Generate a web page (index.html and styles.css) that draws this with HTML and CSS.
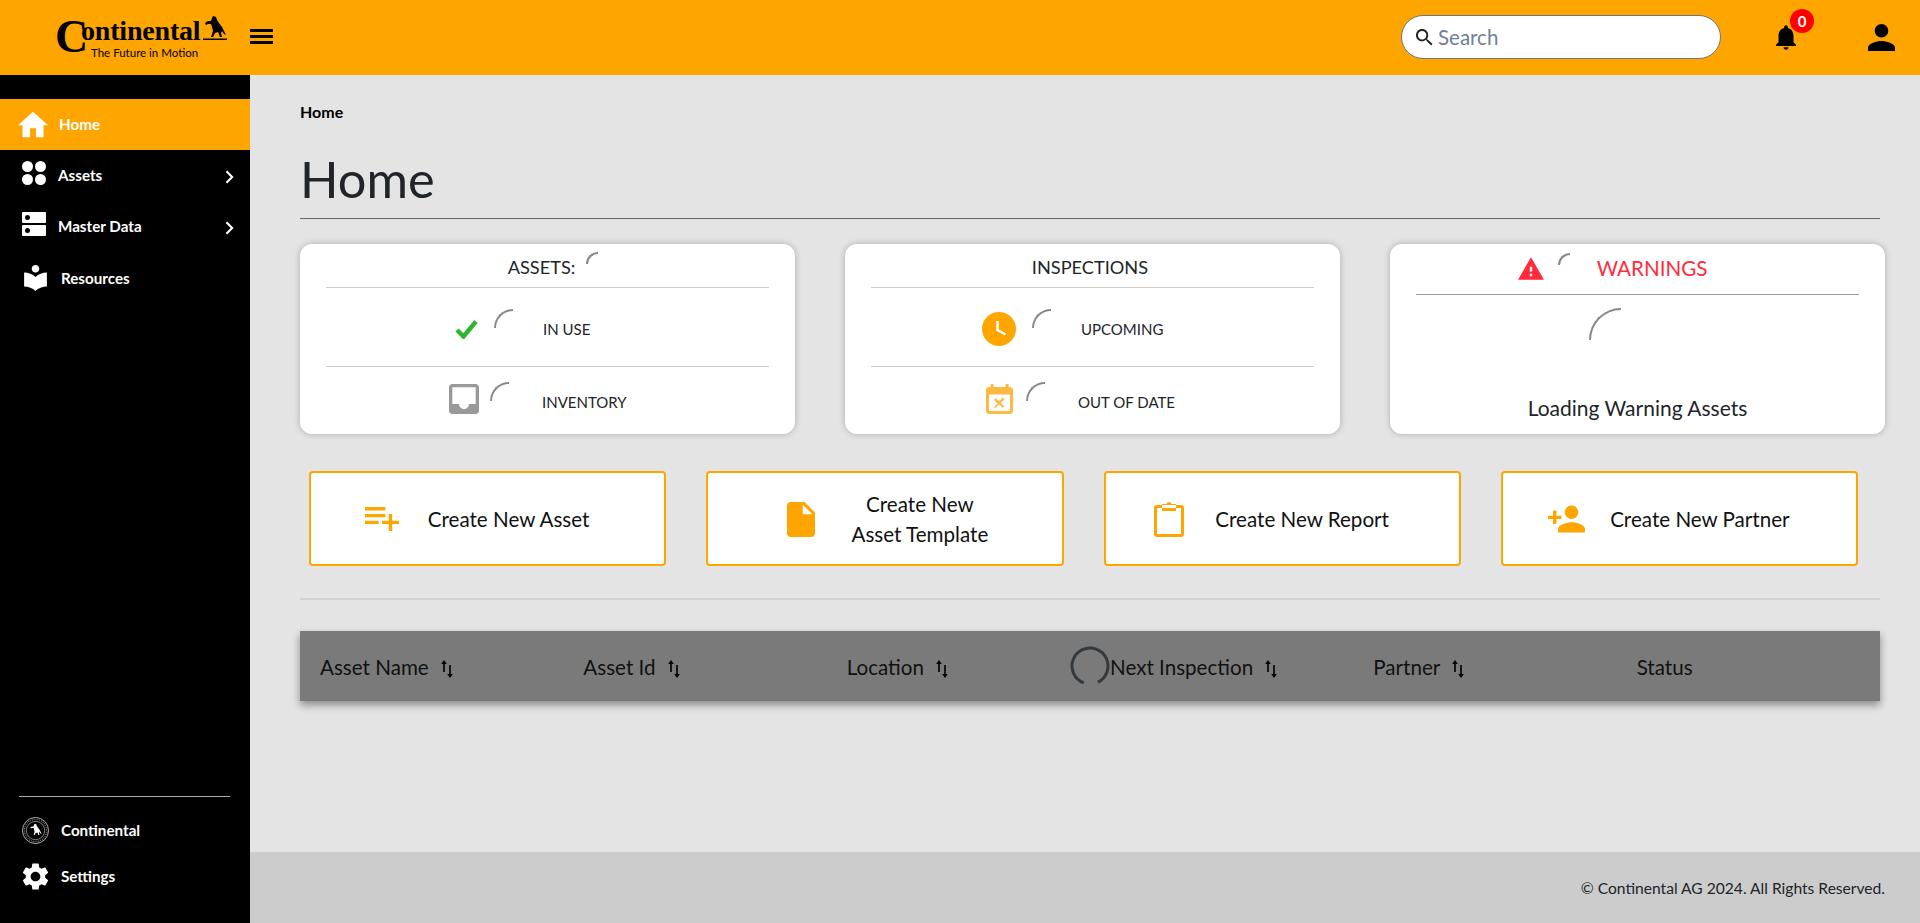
FILE: index.html
```html
<!DOCTYPE html>
<html lang="en">
<head>
    <meta charset="UTF-8">
    <meta name="viewport" content="width=device-width, initial-scale=1.0">
    <title>Home</title>
    <link rel="stylesheet" href="styles.css">
</head>
<body>
    <header class="topbar">
        <div class="logo">
            <div class="logo-mark">
                <div class="logo-word">Continental</div>
                <svg class="logo-horse" viewBox="0 0 24 24"><path d="M10 0l3 1 1 3 2 3 3 4 2 4 2 4-2-1-2-3-1 2 1 4h-2l-2-5-3 1-2 4H8l2-6-1-4-1-3H5l-2 1-1-2 3-2h3l1-3z"/><path d="M0 22.500h24V24H0z"/></svg>
            </div>
            <div class="logo-tag">The Future in Motion</div>
        </div>
        <div class="hamburger"><span></span><span></span><span></span></div>

        <div class="search">
            <svg class="search-icon" viewBox="3 3 18 18"><path d="M15.500 14h-.79l-.28-.27C15.410 12.590 16 11.110 16 9.500 16 5.910 13.090 3 9.500 3S3 5.910 3 9.500 5.910 16 9.500 16c1.610 0 3.090-.59 4.230-1.570l.27.28v.79l5 4.990L20.490 19l-4.990-5zm-6 0C7.010 14 5 11.990 5 9.500S7.010 5 9.500 5 14 7.010 14 9.500 11.990 14 9.500 14z"/></svg>
            <span class="search-text">Search</span>
        </div>
        <div class="bell">
            <svg class="bell-icon" viewBox="4 2.500 16 19.500"><path d="M12 22c1.100 0 2-.9 2-2h-4c0 1.100.89 2 2 2zm6-6v-5c0-3.070-1.640-5.640-4.500-6.320V4c0-.83-.67-1.500-1.500-1.500s-1.500.67-1.500 1.500v.68C7.630 5.360 6 7.920 6 11v5l-2 2v1h16v-1l-2-2z"/></svg>
            <span class="badge">0</span>
        </div>
        <svg class="user-icon" viewBox="4 4 16 16"><path d="M12 12c2.210 0 4-1.790 4-4s-1.790-4-4-4-4 1.790-4 4 1.790 4 4 4zm0 2c-2.670 0-8 1.340-8 4v2h16v-2c0-2.660-5.330-4-8-4z"/></svg>
    </header>

    <div class="page">
        <nav class="sidebar">
            <ul class="nav-list">
                <li class="nav-item active">
                    <svg class="nav-icon nav-icon-home" viewBox="2 3 20 17"><path d="M10 20v-6h4v6h5v-8h3L12 3 2 12h3v8z"/></svg>
                    <span>Home</span>
                </li>
                <li class="nav-item">
                    <svg class="nav-icon nav-icon-assets" viewBox="0 0 24 24"><circle cx="5.500" cy="5.500" r="5.500"/><circle cx="18.500" cy="5.500" r="5.500"/><circle cx="5.500" cy="18.500" r="5.500"/><circle cx="18.500" cy="18.500" r="5.500"/></svg>
                    <span>Assets</span>
                    <svg class="nav-arrow" viewBox="0 0 10 16"><path d="M1.500 1.500L8 8l-6.500 6.500"/></svg>
                </li>
                <li class="nav-item">
                    <svg class="nav-icon nav-icon-assets" viewBox="0 0 24 24"><path d="M1 0h22a1 1 0 0 1 1 1v9a1 1 0 0 1-1 1H1a1 1 0 0 1-1-1V1a1 1 0 0 1 1-1zm4.500 3a2.500 2.500 0 1 0 0 5 2.500 2.500 0 0 0 0-5zM1 13h22a1 1 0 0 1 1 1v9a1 1 0 0 1-1 1H1a1 1 0 0 1-1-1v-9a1 1 0 0 1 1-1zm4.500 3a2.500 2.500 0 1 0 0 5 2.500 2.500 0 0 0 0-5z" fill-rule="evenodd"/></svg>
                    <span>Master Data</span>
                    <svg class="nav-arrow" viewBox="0 0 10 16"><path d="M1.500 1.500L8 8l-6.500 6.500"/></svg>
                </li>
                <li class="nav-item nav-item-wide">
                    <svg class="nav-icon nav-icon-book" viewBox="3 2 18 20.550"><path d="M12 11.550C9.640 9.350 6.480 8 3 8v11c3.480 0 6.640 1.350 9 3.550 2.360-2.190 5.520-3.550 9-3.550V8c-3.480 0-6.640 1.350-9 3.550zM12 8c1.660 0 3-1.340 3-3s-1.340-3-3-3-3 1.340-3 3 1.340 3 3 3z"/></svg>
                    <span>Resources</span>
                </li>
            </ul>
            <ul class="nav-foot">
                <li class="foot-item">
                    <svg class="foot-icon" viewBox="0 0 28 28">
                        <circle cx="14" cy="14" r="13.500" fill="none" stroke="#fff" stroke-width=".7"/>
                        <circle cx="14" cy="14" r="9.500" fill="none" stroke="#fff" stroke-width=".5"/>
                        <circle cx="14" cy="14" r="11.500" fill="none" stroke="#888" stroke-width="1.500" stroke-dasharray=".8 1.200"/>
                        <path transform="translate(7.500 7) scale(.56)" d="M10 0l3 1 1 3 2 3 3 4 2 4 2 4-2-1-2-3-1 2 1 4h-2l-2-5-3 1-2 4H8l2-6-1-4-1-3H5l-2 1-1-2 3-2h3l1-3z" fill="#fff"/>
                    </svg>
                    <span>Continental</span>
                </li>
                <li class="foot-item">
                    <svg class="foot-icon" viewBox="2.500 2 19 20"><path d="M19.140 12.940c.04-.3.060-.61.060-.94 0-.32-.02-.64-.07-.94l2.030-1.580c.18-.14.23-.41.120-.61l-1.920-3.320c-.12-.22-.37-.29-.59-.22l-2.390.960c-.5-.38-1.030-.7-1.620-.94l-.36-2.540c-.04-.24-.24-.41-.48-.41h-3.840c-.24 0-.43.170-.47.410l-.36 2.540c-.59.240-1.130.570-1.620.940l-2.390-.96c-.22-.08-.47 0-.59.220L2.740 8.870c-.12.210-.08.470.120.610l2.030 1.580c-.05.300-.09.630-.09.940s.02.640.070.940l-2.030 1.580c-.18.140-.23.410-.12.610l1.920 3.320c.12.220.37.290.59.220l2.390-.96c.5.380 1.030.7 1.620.94l.36 2.540c.05.240.24.410.48.410h3.840c.24 0 .44-.17.47-.41l.36-2.540c.59-.24 1.130-.56 1.620-.94l2.390.96c.22.080.47 0 .59-.22l1.920-3.320c.12-.22.070-.47-.12-.61l-2.010-1.580zM12 15.600c-1.980 0-3.600-1.620-3.600-3.600s1.620-3.600 3.600-3.600 3.600 1.620 3.600 3.600-1.620 3.600-3.600 3.600z"/></svg>
                    <span>Settings</span>
                </li>
            </ul>
        </nav>

        <div class="main">
            <main class="content">
                <div class="breadcrumb">Home</div>
                <h1 class="page-title">Home</h1>

                <section class="cards">
                    <div class="card">
                        <div class="card-title card-title-assets">
                            <span>ASSETS:</span>
                            <i class="arc arc-small"></i>
                        </div>
                        <div class="stat-row">
                            <div class="stat-icon">
                                <svg class="icon-check" viewBox="0 0 23 20"><path d="M2 11l6.500 6.500L21 2.500"/></svg>
                            </div>
                            <i class="arc"></i>
                            <span class="stat-label">IN USE</span>
                        </div>
                        <div class="stat-row stat-row-low">
                            <div class="stat-icon">
                                <svg class="icon-inbox" viewBox="3 3 18 18"><path d="M19 3H5c-1.100 0-2 .9-2 2v14c0 1.100.9 2 2 2h14c1.100 0 2-.9 2-2V5c0-1.100-.9-2-2-2zm0 12h-4c0 1.660-1.350 3-3 3s-3-1.340-3-3H5V5h14v10z"/></svg>
                            </div>
                            <i class="arc"></i>
                            <span class="stat-label">INVENTORY</span>
                        </div>
                    </div>

                    <div class="card card-inspections">
                        <div class="card-title">INSPECTIONS</div>
                        <div class="stat-row">
                            <div class="stat-icon">
                                <svg class="icon-clock" viewBox="0 0 34 34"><circle cx="17" cy="17" r="17"/><path d="M15.500 9v9l8 4.500"/></svg>
                            </div>
                            <i class="arc"></i>
                            <span class="stat-label">UPCOMING</span>
                        </div>
                        <div class="stat-row stat-row-low">
                            <div class="stat-icon">
                                <svg class="icon-calendar" viewBox="3 1 18 20"><path d="M9.310 17l2.440-2.440L14.190 17l1.060-1.060-2.440-2.440 2.440-2.440-1.060-1.060-2.440 2.440L9.310 10.500l-1.060 1.060 2.440 2.440-2.440 2.440L9.310 17zM19 3h-1V1h-2v2H8V1H6v2H5c-1.110 0-1.990.9-1.990 2L3 19c0 1.100.89 2 2 2h14c1.100 0 2-.9 2-2V5c0-1.100-.9-2-2-2zm0 16H5V8h14v11z"/></svg>
                            </div>
                            <i class="arc"></i>
                            <span class="stat-label">OUT OF DATE</span>
                        </div>
                    </div>

                    <div class="card">
                        <div class="warn-title">
                            <svg class="icon-warning" viewBox="1 2 22 19"><path d="M1 21h22L12 2 1 21zm12-3h-2v-2h2v2zm0-4h-2v-4h2v4z"/></svg>
                            <i class="arc arc-small"></i>
                            <span class="warn-text">WARNINGS</span>
                        </div>
                        <div class="warn-body">
                            <i class="arc arc-big"></i>
                            <p class="warn-loading">Loading Warning Assets</p>
                        </div>
                    </div>
                </section>

                <section class="shortcuts">
                    <a class="shortcut" href="#">
                        <svg class="shortcut-icon icon-list" viewBox="2 6 20 14"><path d="M14 10H2v2h12v-2zm0-4H2v2h12V6zm4 8v-4h-2v4h-4v2h4v4h2v-4h4v-2h-4zM2 16h8v-2H2v2z"/></svg>
                        <span class="shortcut-text">Create New Asset</span>
                    </a>
                    <a class="shortcut shortcut-template" href="#">
                        <svg class="shortcut-icon icon-file" viewBox="4 2 16 20"><path d="M6 2c-1.100 0-1.990.9-1.990 2L4 20c0 1.100.89 2 1.990 2H18c1.100 0 2-.9 2-2V8l-6-6H6zm7 7V3.500L18.500 9H13z"/></svg>
                        <span class="shortcut-text">Create New<br>Asset Template</span>
                    </a>
                    <a class="shortcut" href="#">
                        <svg class="shortcut-icon icon-clipboard" viewBox="0 0 30 37"><path d="M3 5h24a3 3 0 0 1 3 3v26a3 3 0 0 1-3 3H3a3 3 0 0 1-3-3V8a3 3 0 0 1 3-3zm0 3v26h24V8zM8 4h4.500a2.600 2.600 0 0 1 5 0H22v7H8z" fill-rule="evenodd"/></svg>
                        <span class="shortcut-text">Create New Report</span>
                    </a>
                    <a class="shortcut" href="#">
                        <svg class="shortcut-icon icon-partner" viewBox="1 4 22 16"><path d="M15 12c2.210 0 4-1.790 4-4s-1.790-4-4-4-4 1.790-4 4 1.790 4 4 4zm-9-2V7H4v3H1v2h3v3h2v-3h3v-2H6zm9 4c-2.670 0-8 1.340-8 4v2h16v-2c0-2.660-5.330-4-8-4z"/></svg>
                        <span class="shortcut-text">Create New Partner</span>
                    </a>
                </section>

                <div class="divider"></div>

                <table class="asset-table">
                    <thead>
                        <tr>
                            <th>Asset Name <svg class="sort" viewBox="0 0 12 18"><path d="M3 0l2.800 4H3.800v8H2.200V4H.2zM9 18l2.800-4H9.800V5H8.200v9H6.200z"/></svg></th>
                            <th>Asset Id <svg class="sort" viewBox="0 0 12 18"><path d="M3 0l2.800 4H3.800v8H2.200V4H.2zM9 18l2.800-4H9.800V5H8.200v9H6.200z"/></svg></th>
                            <th>Location <svg class="sort" viewBox="0 0 12 18"><path d="M3 0l2.800 4H3.800v8H2.200V4H.2zM9 18l2.800-4H9.800V5H8.200v9H6.200z"/></svg></th>
                            <th class="th-loading">
                                <svg class="table-spinner" viewBox="0 0 40 40"><circle cx="20" cy="20" r="18" transform="rotate(110 20 20)"/></svg>
                                Next Inspection <svg class="sort" viewBox="0 0 12 18"><path d="M3 0l2.800 4H3.800v8H2.200V4H.2zM9 18l2.800-4H9.800V5H8.200v9H6.200z"/></svg>
                            </th>
                            <th>Partner <svg class="sort" viewBox="0 0 12 18"><path d="M3 0l2.800 4H3.800v8H2.200V4H.2zM9 18l2.800-4H9.800V5H8.200v9H6.200z"/></svg></th>
                            <th>Status</th>
                        </tr>
                    </thead>
                </table>
            </main>

            <footer class="footer">© Continental AG 2024. All Rights Reserved.</footer>
        </div>
    </div>
</body>
</html>
```

FILE: styles.css
```css
* {
    box-sizing: border-box;
}
html, body {
    height: 100%;
}
body {
    margin: 0;
    display: flex;
    flex-direction: column;
    overflow: hidden;
    font-family: Lato, "Open Sans", sans-serif;
    color: #212529;
    background: #e4e4e4;
}

/* top bar */
.topbar {
    height: 75px;
    flex-shrink: 0;
    display: flex;
    align-items: center;
    padding-left: 55px;
    background: #ffa500;
}
.logo {
    width: 195px;
    height: 75px;
    padding-top: 16px;
    color: #000;
}
.logo-mark {
    display: flex;
    height: 30px;
    font-family: "Liberation Serif", serif;
    font-weight: bold;
}
.logo-word {
    font-size: 28px;
    line-height: 30px;
    letter-spacing: -0.2px;
}
.logo-word::first-letter {
    float: left;
    font-size: 46px;
    line-height: 36px;
    margin-top: 3px;
    margin-right: -7px;
}
.logo-horse {
    width: 24px;
    height: 24px;
    margin-left: 3px;
}
.logo-tag {
    margin-left: 36px;
    font-size: 11.500px;
    line-height: 14px;
}
.hamburger {
    width: 23px;
}
.hamburger span {
    display: block;
    height: 3px;
    margin-bottom: 3px;
    background: #000;
}
.search {
    width: 320px;
    height: 44px;
    margin-left: auto;
    margin-bottom: 1px;
    display: flex;
    align-items: center;
    padding-left: 14px;
    background: #fff;
    border: 1px solid #6c757d;
    border-radius: 22px;
}
.search-icon {
    width: 17px;
    height: 17px;
    fill: #222;
}
.search-text {
    margin-left: 5px;
    font-size: 20.500px;
    color: #6c8296;
}
.bell {
    position: relative;
    width: 20px;
    height: 25px;
    margin-left: 55px;
}
.bell-icon {
    display: block;
    width: 20px;
    height: 25px;
}
.badge {
    position: absolute;
    left: 14px;
    top: -16px;
    width: 24px;
    height: 24px;
    border-radius: 50%;
    background: #f00;
    color: #fff;
    font-size: 15px;
    font-weight: bold;
    line-height: 24px;
    text-align: center;
}
.user-icon {
    width: 27px;
    height: 27px;
    margin-left: 72px;
    margin-right: 25px;
}

/* sidebar */
.page {
    flex: 1;
    display: flex;
    min-height: 0;
}
.sidebar {
    width: 250px;
    flex-shrink: 0;
    display: flex;
    flex-direction: column;
    justify-content: space-between;
    padding: 24px 0;
    background: #000;
    color: #fff;
    font-size: 15.200px;
    font-weight: bold;
}
.nav-list, .nav-foot {
    margin: 0;
    padding: 0;
    list-style: none;
}
.nav-item {
    height: 51px;
    display: flex;
    align-items: center;
    padding: 0 0 1px 22px;
}
.nav-item.active {
    padding-left: 18px;
    background: #ffa500;
}
.nav-item-wide {
    padding: 0 0 0 24px;
}
.nav-icon {
    fill: #fff;
    flex-shrink: 0;
}
.nav-icon-home {
    width: 30px;
    height: 27px;
    margin-right: 11px;
}
.nav-icon-assets {
    width: 24px;
    height: 24px;
    margin-right: 12px;
    margin-bottom: 5px;
}
.nav-icon-book {
    width: 23px;
    height: 26px;
    margin-right: 14px;
}
.nav-arrow {
    width: 9px;
    height: 14px;
    margin: 4px 16px 0 auto;
    fill: none;
    stroke: #fff;
    stroke-width: 2.400;
}
.nav-foot {
    margin: 0 20px 0 19px;
    padding-top: 10px;
    border-top: 1px solid #aaa;
}
.foot-item {
    height: 46px;
    display: flex;
    align-items: center;
    padding-left: 3px;
}
.foot-icon {
    width: 27px;
    height: 27px;
    margin-right: 12px;
    fill: #fff;
}

/* content */
.main {
    flex: 1;
    min-width: 0;
    display: flex;
    flex-direction: column;
}
.content {
    flex: 1;
    padding: 25px 35px 0 50px;
}
.breadcrumb {
    font-size: 16px;
    font-weight: bold;
    line-height: 24px;
    color: #000;
}
.page-title {
    margin: 24px 5px 0 0;
    padding-bottom: 8px;
    border-bottom: 1px solid #666;
    font-size: 50.500px;
    font-weight: 400;
    line-height: 62px;
}
.cards {
    display: grid;
    grid-template-columns: repeat(3, 1fr);
    gap: 50px;
    margin-top: 25px;
}
.card {
    height: 190px;
    padding: 0 26px;
    background: #fff;
    border-radius: 12px;
    box-shadow: 0 0 6px rgba(0, 0, 0, 0.25);
}
.card-title {
    height: 44px;
    display: flex;
    align-items: center;
    justify-content: center;
    padding-top: 3px;
    border-bottom: 1px solid #ccc;
    font-size: 18.200px;
}
.card-inspections .card-title {
    padding-right: 5px;
}
.card-title-assets {
    gap: 11px;
    padding-left: 11px;
}
.stat-row {
    height: 79px;
    display: flex;
    align-items: center;
    padding-top: 4px;
    border-bottom: 1px solid #ccc;
}
.stat-row-low {
    height: 66px;
    border-bottom: none;
}
.stat-icon {
    width: 152px;
    display: flex;
    justify-content: flex-end;
}
.card-inspections .stat-icon {
    width: 145px;
}
.stat-row-low .stat-icon {
    margin-bottom: 6px;
}
.stat-label {
    margin-left: 30px;
    font-size: 15px;
}
.stat-row-low .stat-label {
    margin-left: 33px;
}
.arc {
    display: block;
    flex-shrink: 0;
    width: 19px;
    height: 19px;
    margin-left: 16px;
    margin-bottom: 22px;
    border-top: 2px solid #888;
    border-left: 2px solid #888;
    border-top-left-radius: 100%;
}
.stat-row-low .arc {
    margin-left: 12px;
}
.card-inspections .stat-row-low .arc {
    margin-left: 10px;
}
.arc.arc-small {
    width: 12px;
    height: 12px;
    margin-left: 0;
    margin-bottom: 18px;
}
.arc.arc-big {
    width: 32px;
    height: 32px;
    margin: 0 66px 0 0;
}
.icon-check {
    width: 23px;
    height: 20px;
    fill: none;
    stroke: #2fb52f;
    stroke-width: 4.500;
}
.icon-inbox {
    width: 30px;
    height: 30px;
    margin-right: -1px;
    fill: #999;
}
.icon-clock {
    width: 34px;
    height: 34px;
    fill: #ffa500;
}
.icon-clock path {
    fill: none;
    stroke: #fff;
    stroke-width: 2.500;
}
.icon-calendar {
    width: 27px;
    height: 30px;
    margin-right: 3px;
    fill: #ffb840;
}

/* warnings card */
.warn-title {
    height: 51px;
    display: flex;
    align-items: center;
    justify-content: center;
    padding: 0 50px 2px 0;
    border-bottom: 1px solid #999;
}
.icon-warning {
    width: 26px;
    height: 23px;
    margin-right: 14px;
    fill: #ff2a3a;
}
.warn-text {
    margin-left: 27px;
    font-size: 20.600px;
    color: #ff2a3a;
}
.warn-body {
    display: flex;
    flex-direction: column;
    align-items: center;
    padding-top: 13px;
}
.warn-loading {
    margin: 56px 0 0;
    font-size: 21px;
    line-height: 24px;
}

/* shortcut buttons */
.shortcuts {
    display: grid;
    grid-template-columns: repeat(4, 1fr);
    gap: 40px;
    margin-top: 37px;
    padding: 0 27px 0 9px;
}
.shortcut {
    height: 95px;
    display: flex;
    align-items: center;
    justify-content: center;
    padding-right: 21px;
    background: #fff;
    border: 2px solid #ffa500;
    border-radius: 4px;
    color: #111;
    text-decoration: none;
}
.shortcut-template {
    padding: 1px 0 0 6px;
}
.shortcut-template .shortcut-text {
    text-align: center;
}
.shortcut-icon {
    flex-shrink: 0;
    fill: #ffa500;
}
.shortcut-text {
    font-size: 20.600px;
    line-height: 30px;
}
.icon-list {
    width: 34px;
    height: 24px;
    margin-right: 29px;
}
.icon-file {
    width: 28px;
    height: 35px;
    margin-right: 36px;
}
.icon-clipboard {
    width: 30px;
    height: 37px;
    margin-right: 31px;
}
.icon-partner {
    width: 37px;
    height: 28px;
    margin-right: 25px;
}
.divider {
    height: 2px;
    margin: 32px 5px 0 0;
    background: #d2d2d2;
}

/* table */
.asset-table {
    width: 1580px;
    margin-top: 31px;
    border-collapse: collapse;
    table-layout: fixed;
    background: #7a7a7a;
    box-shadow: 0 4px 8px rgba(0, 0, 0, 0.4);
}
.asset-table th {
    height: 70px;
    padding: 2px 0 0 20px;
    text-align: left;
    font-size: 20.600px;
    font-weight: normal;
    color: #111;
}
.th-loading {
    position: relative;
}
.sort {
    width: 12px;
    height: 18px;
    margin-left: 7px;
    vertical-align: -3px;
    fill: #000;
}
.table-spinner {
    position: absolute;
    left: -20px;
    top: 15px;
    width: 40px;
    height: 40px;
    fill: none;
    stroke: #34393e;
    stroke-width: 3;
    stroke-dasharray: 98 15;
}

.footer {
    height: 71px;
    flex-shrink: 0;
    display: flex;
    align-items: center;
    justify-content: flex-end;
    padding-right: 35px;
    background: #ccc;
    font-size: 15.600px;
}
```
